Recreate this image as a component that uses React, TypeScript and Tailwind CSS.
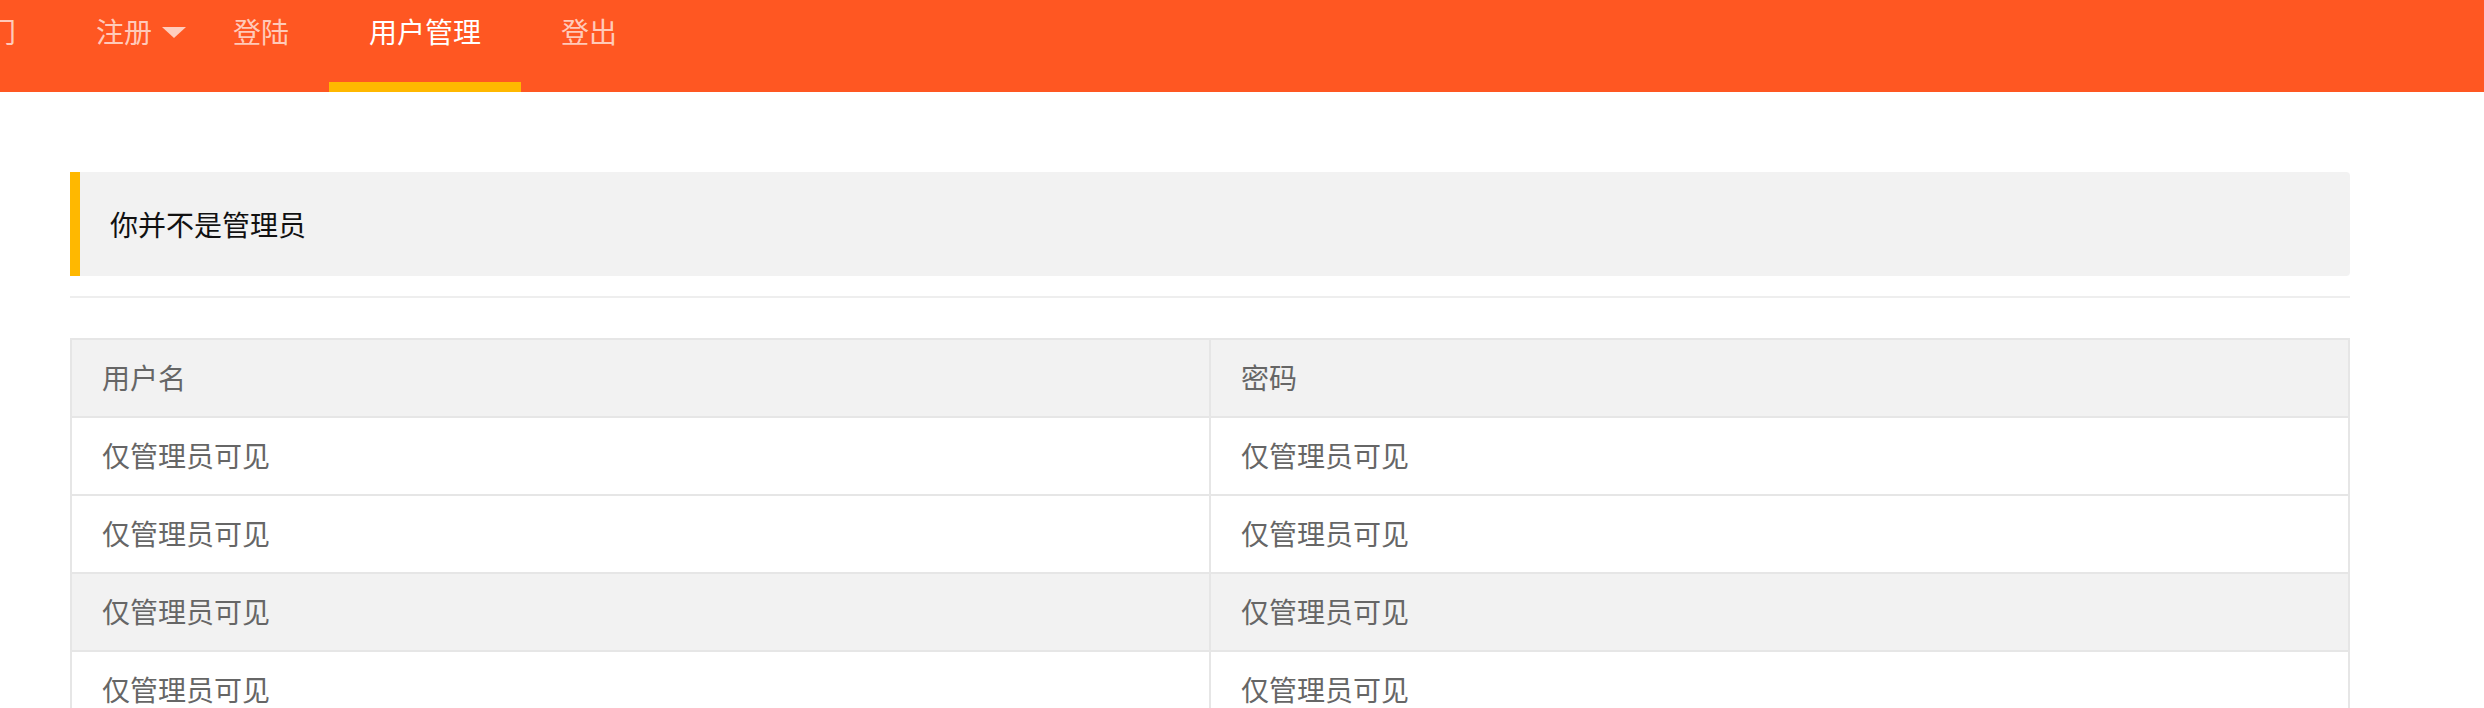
import React from 'react';

const NAV = [
  { label: '热门', first: true },
  { label: '注册', more: true },
  { label: '登陆' },
  { label: '用户管理', active: true },
  { label: '登出' },
];

const ROWS = [0, 1, 2, 3, 4];

export default function App() {
  return (
    <div className="min-h-screen bg-white text-[28px]" style={{ fontFamily: '"Noto Sans CJK SC", "Noto Sans", sans-serif' }}>
      {/* Top nav, page is scrolled a bit so only the lower part shows */}
      <div className="h-[92px] overflow-hidden bg-[#FF5722]">
        <ul className="flex h-full">
          {NAV.map(item => (
            <li
              key={item.label}
              className={`flex h-full flex-col ${item.first ? '-ml-[80px]' : ''}`}
            >
              <div className="flex items-center pl-[40px]">
                <span
                  className={`leading-[62px] ${item.active ? 'text-white' : 'text-white/70'}`}
                >
                  {item.label}
                </span>
                {item.more ? (
                  <span className="ml-[10px] mr-[7px] mt-[2px] h-0 w-0 border-x-[12px] border-t-[11px] border-x-transparent border-t-white/70" />
                ) : (
                  <span className="w-[40px]" />
                )}
              </div>
              {item.active && <div className="mt-auto h-[10px] w-full bg-[#FFB800]" />}
            </li>
          ))}
        </ul>
      </div>

      <div className="ml-[70px] w-[2280px]">
        {/* Quote */}
        <div className="mt-[80px] rounded-r-[4px] border-l-[10px] border-[#FFB800] bg-[#f2f2f2] px-[30px] py-[30px] leading-[44px] text-[#111]">
          你并不是管理员
        </div>

        <div className="mt-[20px] h-[2px] bg-[#eeeeee]" />

        {/* Users table */}
        <table className="mt-[40px] w-full table-fixed border-collapse text-[#666]">
          <thead>
            <tr className="bg-[#f2f2f2]">
              <th className="border-2 border-[#e6e6e6] px-[30px] pt-[17px] pb-[19px] text-left font-normal leading-[40px]">用户名</th>
              <th className="border-2 border-[#e6e6e6] px-[30px] pt-[17px] pb-[19px] text-left font-normal leading-[40px]">密码</th>
            </tr>
          </thead>
          <tbody>
            {ROWS.map(i => (
              <tr key={i} className={i === 2 ? 'bg-[#f2f2f2]' : 'bg-white'}>
                <td className="border-2 border-[#e6e6e6] px-[30px] pt-[17px] pb-[19px] leading-[40px]">仅管理员可见</td>
                <td className="border-2 border-[#e6e6e6] px-[30px] pt-[17px] pb-[19px] leading-[40px]">仅管理员可见</td>
              </tr>
            ))}
          </tbody>
        </table>
      </div>
    </div>
  );
}
